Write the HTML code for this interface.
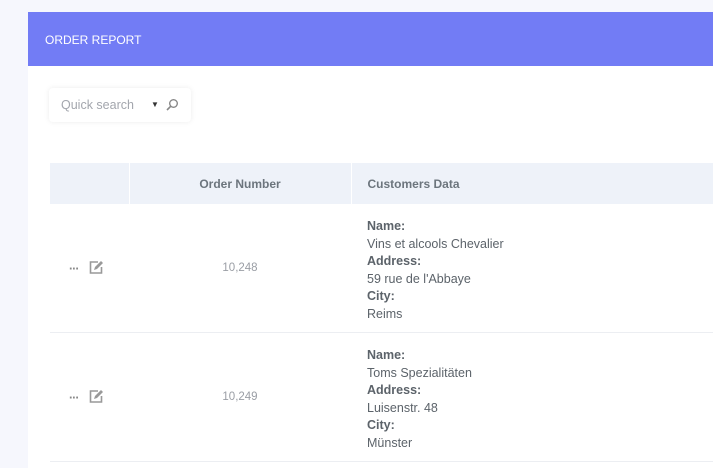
<!DOCTYPE html>
<html><head><style>
html,body{margin:0;width:713px;height:468px;overflow:hidden}
body{background:#f6f7fd;font-family:"Liberation Sans",sans-serif;position:relative}
.panel{position:absolute;left:28px;top:12px;width:700px;height:470px;background:#fff}
.hdr{height:54px;background:#727cf5;color:#fff;font-size:12px;line-height:56px;padding-left:17px}
.search{position:absolute;left:21px;top:76px;width:142px;height:34px;background:#fff;border-radius:4px;box-shadow:0 0 6px rgba(0,0,0,.08);font-size:12.5px;color:#a3a6ad;line-height:34px;padding-left:12px;box-sizing:border-box}
.tbl{position:absolute;left:22px;top:151px;width:700px;border-collapse:collapse;table-layout:fixed}
th{background:#eef2f9;height:41px;padding:0;font-size:12px;color:#6c757d;font-weight:bold;border-right:1px solid #fff}
td{border-bottom:1px solid #eceef2;height:128px;padding:0;font-size:12.5px;color:#6c757d;vertical-align:middle}
td.c{color:#5c636a;line-height:17.5px;padding-left:16px;vertical-align:top;padding-top:14px;height:114px}
.c b{color:#5c636a}
.num{text-align:center;color:#9a9ea5;font-size:11.5px}
</style></head><body>
<div class="panel">
<div class="hdr">ORDER REPORT</div>
<div class="search">Quick search
<span style="position:absolute;left:102px;top:0;font-size:8px;color:#333">▼</span>
<svg style="position:absolute;left:116px;top:10px" width="14" height="14" viewBox="0 0 14 14"><circle cx="8.5" cy="5.5" r="3.8" fill="none" stroke="#888" stroke-width="1.4"/><line x1="5.8" y1="8.2" x2="2" y2="12" stroke="#888" stroke-width="1.6"/></svg>
</div>
<table class="tbl">
<colgroup><col style="width:79px"><col style="width:222px"><col></colgroup>
<tr><th></th><th>Order Number</th><th style="text-align:left;padding-left:16px">Customers Data</th></tr>
<tr><td style="padding-left:19px"><span style="color:#888;font-weight:bold;letter-spacing:-1px">···</span>
<svg width="16" height="15" viewBox="0 0 16 15" style="margin-left:6px;vertical-align:-2px"><path d="M10 2H2.5v11h11V7" fill="none" stroke="#999" stroke-width="1.6"/><path d="M6 10l1-3 6-6 2 2-6 6z" fill="#999"/></svg></td><td class="num">10,248</td>
<td class="c"><b>Name:</b><br>Vins et alcools Chevalier<br><b>Address:</b><br>59 rue de l'Abbaye<br><b>City:</b><br>Reims</td></tr>
<tr><td style="padding-left:19px"><span style="color:#888;font-weight:bold;letter-spacing:-1px">···</span>
<svg width="16" height="15" viewBox="0 0 16 15" style="margin-left:6px;vertical-align:-2px"><path d="M10 2H2.5v11h11V7" fill="none" stroke="#999" stroke-width="1.6"/><path d="M6 10l1-3 6-6 2 2-6 6z" fill="#999"/></svg></td><td class="num">10,249</td>
<td class="c"><b>Name:</b><br>Toms Spezialitäten<br><b>Address:</b><br>Luisenstr. 48<br><b>City:</b><br>Münster</td></tr>
</table>
</div>
</body></html>
